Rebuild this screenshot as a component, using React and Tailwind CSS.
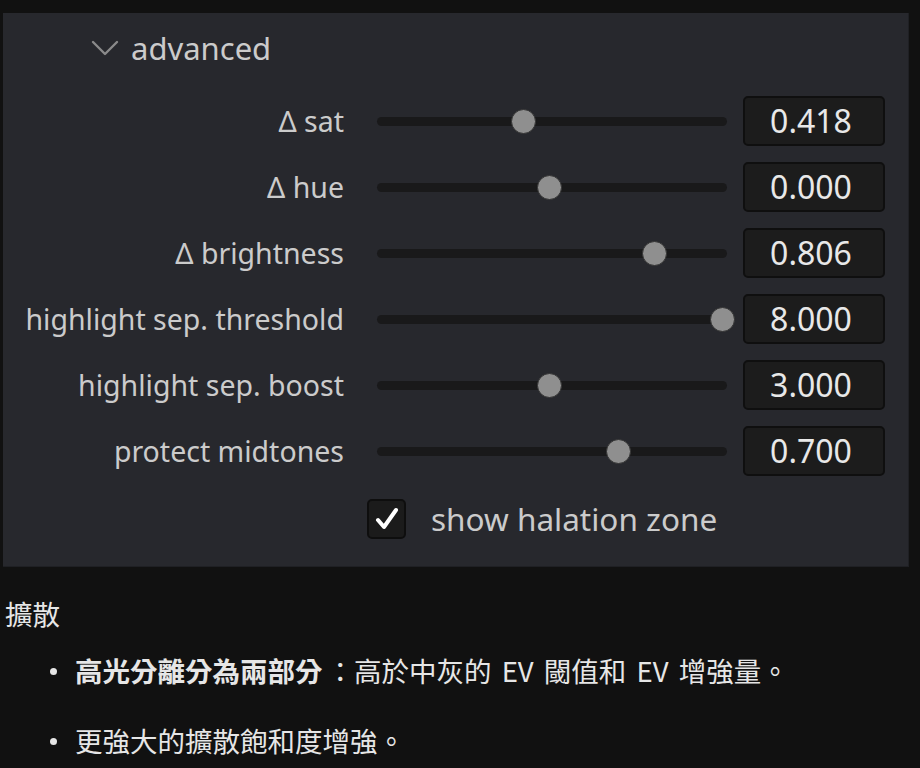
import React from "react";

const rows = [
  { label: "Δ sat", value: "0.418", pos: 0.425 },
  { label: "Δ hue", value: "0.000", pos: 0.5 },
  { label: "Δ brightness", value: "0.806", pos: 0.806 },
  { label: "highlight sep. threshold", value: "8.000", pos: 1 },
  { label: "highlight sep. boost", value: "3.000", pos: 0.5 },
  { label: "protect midtones", value: "0.700", pos: 0.702 },
];

const SliderRow = ({ label, value, pos }) => (
  <div className="flex items-center h-[50px]">
    <div className="w-[341px] text-right text-[28.5px] text-[#cbcbcb] leading-none">{label}</div>
    {/* track + thumb */}
    <div className="relative ml-[33px] w-[350px] h-[25px] flex items-center">
      <div className="w-full h-[9px] rounded-full bg-[#19191a]" />
      <div
        className="absolute top-0 w-[25px] h-[25px] rounded-full bg-[#8f8f8f] border border-[#333333]"
        style={{ left: `${pos * 346 - 13.5}px` }}
      />
    </div>
    <div className="ml-[16px] w-[142px] h-[50px] rounded-[5px] bg-[#1c1c1c] border-2 border-[#0f0f0f] flex items-center justify-center text-[32px] leading-none text-[#e8e8e8] pr-[6px]">
      {value}
    </div>
  </div>
);

export default function App() {
  return (
    <div className="min-h-screen bg-[#111111] pt-[13px]" style={{ fontFamily: '"Noto Sans", "Open Sans", sans-serif' }}>
      {/* darktable module panel */}
      <div className="ml-[3px] w-[906px] bg-[#27282d] border-r border-b border-[#1f2024] pt-[15px] pb-[27px]">
        <div className="flex items-center h-[40px] pl-[88px]">
          <svg width="28" height="18" viewBox="0 0 28 18" className="mr-[12px]">
            <path d="M2 3 L14 15 L26 3" fill="none" stroke="#8a8a8a" strokeWidth="2.4" strokeLinecap="round" strokeLinejoin="round" />
          </svg>
          <span className="text-[31px] leading-none text-[#cbcbcb]">advanced</span>
        </div>

        <div className="mt-[28px] flex flex-col gap-[16px]">
          {rows.map((r) => (
            <SliderRow key={r.label} {...r} />
          ))}
        </div>

        <div className="mt-[23px] ml-[364px] flex items-center h-[40px]">
          <div className="w-[39px] h-[40px] rounded-[5px] bg-[#1b1b1b] border-2 border-[#0e0e0e] flex items-center justify-center">
            <svg width="26" height="26" viewBox="0 0 26 26">
              <path d="M4 14 L10 21 L22 4" fill="none" stroke="#ffffff" strokeWidth="4" strokeLinecap="round" strokeLinejoin="round" />
            </svg>
          </div>
          <span className="ml-[25px] text-[31.5px] leading-none text-[#cbcbcb]">show halation zone</span>
        </div>
      </div>

      {/* notes below */}
      <div className="text-[27.5px] text-[#e6e6e6]" style={{ fontFamily: '"Noto Sans CJK TC", "Noto Sans", sans-serif' }}>
        <div className="mt-[26px] pl-[5px] h-[40px] leading-[40px]">擴散</div>
        <ul className="mt-[18px] flex flex-col gap-[30px]">
          <li className="flex items-center h-[40px]">
            <span className="ml-[50px] w-[7px] h-[7px] rounded-full bg-[#e6e6e6]" />
            <span className="ml-[18px] [word-spacing:4px]">
              <span className="font-bold">高光分離分為兩部分</span><span className="ml-[4px]">：</span>高於中灰的 EV 閾值和 EV 增強量。
            </span>
          </li>
          <li className="flex items-center h-[40px]">
            <span className="ml-[50px] w-[7px] h-[7px] rounded-full bg-[#e6e6e6]" />
            <span className="ml-[18px]">更強大的擴散飽和度增強。</span>
          </li>
        </ul>
      </div>
    </div>
  );
}
